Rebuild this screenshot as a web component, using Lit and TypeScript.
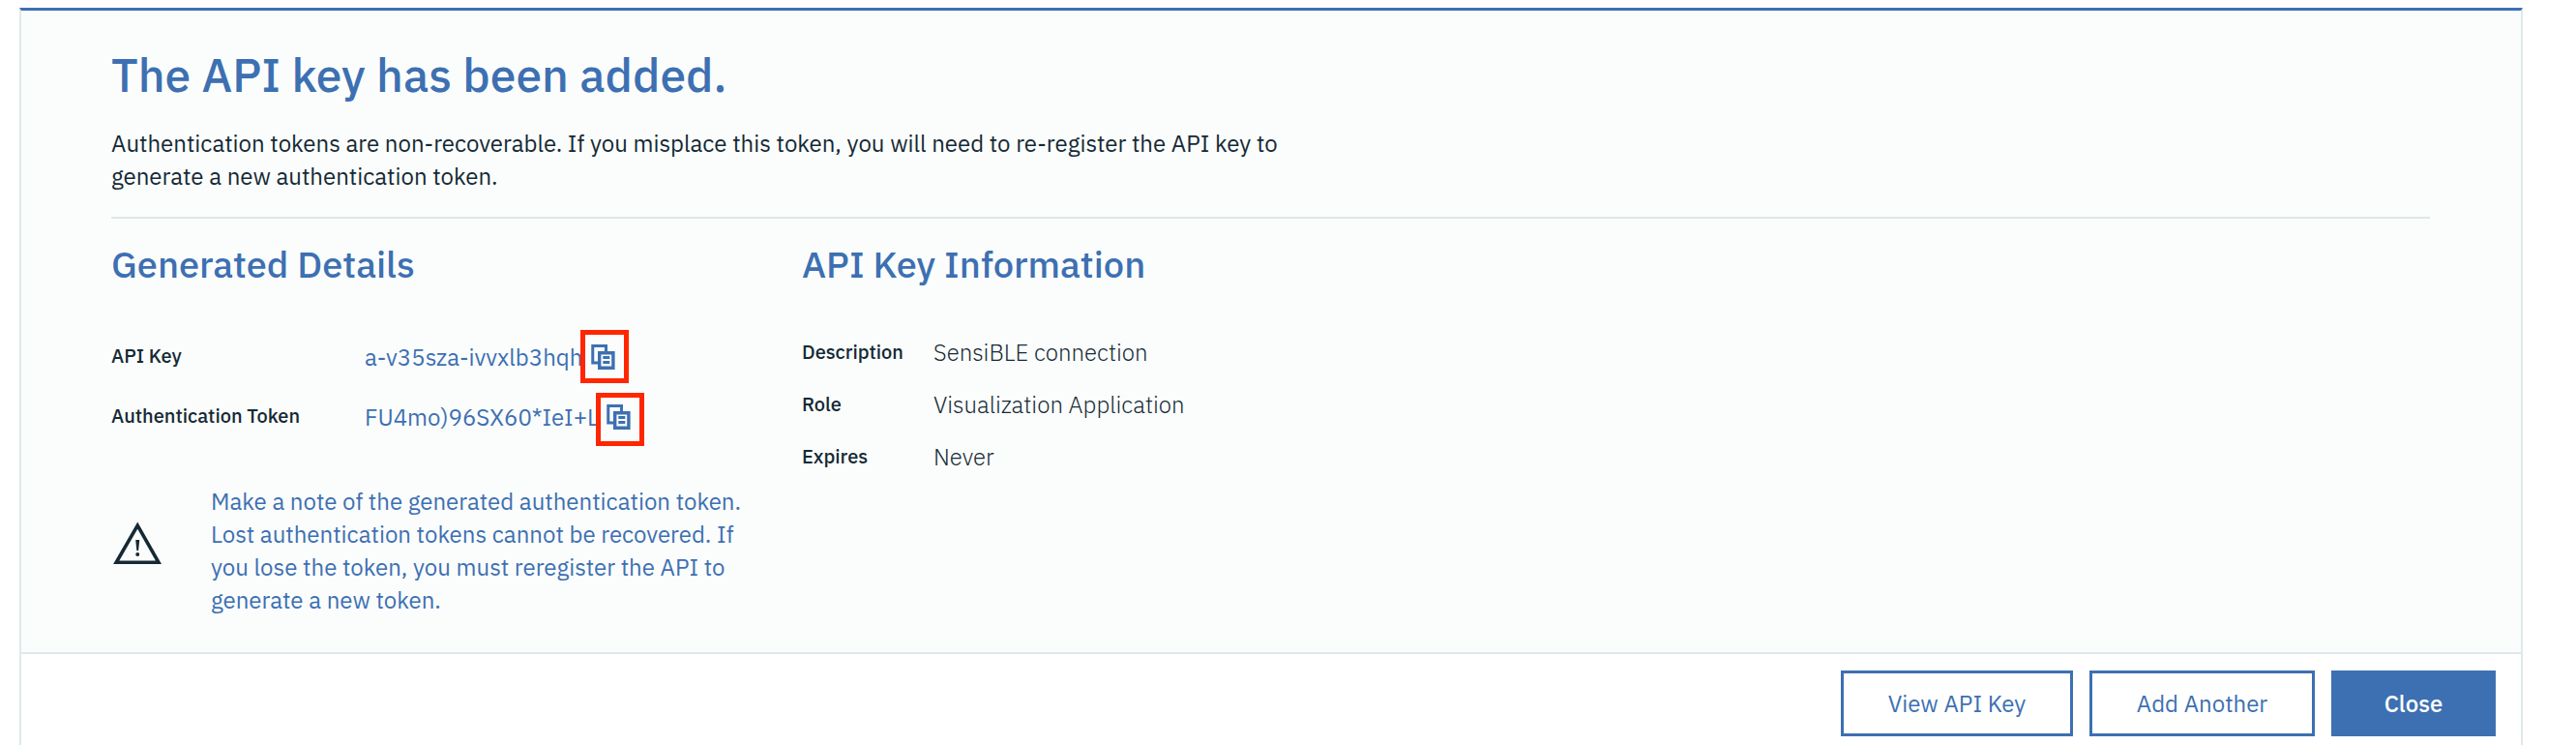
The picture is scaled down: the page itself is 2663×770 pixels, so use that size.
import { LitElement, html, css } from "lit";
import { customElement, property } from "lit/decorators.js";

const FONT = css`"IBM Plex Sans", Inter, "Noto Sans", sans-serif`;

@customElement("copy-button")
class CopyButton extends LitElement {
  @property({ reflect: true }) shift = "";
  static styles = css`
    :host { display: block; position: relative; width: 25px; height: 26px; }
    .icon { display: block; }
    .mark {
      position: absolute; left: -11px; top: -15px; width: 50px; height: 55px;
      box-sizing: border-box; border: 5px solid #ff2600;
    }
    :host([shift="low"]) { margin-left: -1px; }
    :host([shift="low"]) .mark { top: -12px; }
  `;
  render() {
    return html`
      <svg class="icon" width="25" height="26" viewBox="0 0 25 26" fill="none" stroke="#3d70b2">
        <path stroke-width="3" d="M7 19H1.75V1.5H15.5V7" />
        <path stroke-width="3.4" d="M8.7 8.7H22.9V24.3H8.7Z" />
        <path stroke-width="2.8" d="M12.3 13.5H19.3M12.3 18.5H19.3" />
      </svg>
      <span class="mark"></span>
    `;
  }
}

@customElement("app-root")
class AppRoot extends LitElement {
  static styles = css`
    :host {
      display: block; box-sizing: border-box; height: 770px; padding: 8px 55px 0 20px; overflow: hidden;
      background: #fff; color: #152935; font-family: ${FONT}; font-size: 24px; line-height: 34px;
    }
    .panel {
      box-sizing: border-box; height: 762px; display: flex; flex-direction: column;
      border: 2px solid #dfeaea; border-top: 3px solid #3d70b2; border-bottom: 0;
    }
    .content { background: #fbfdfc; padding: 36px 94px 37px 93px; border-bottom: 2px solid #dfe8ea; }
    h1, h2, p, dl, dt, dd { margin: 0; }
    h1 { color: #3d70b2; font-size: 48px; line-height: 60px; font-weight: 500; }
    h2 { color: #3d70b2; font-size: 38px; line-height: 48px; font-weight: 500; }
    .intro { margin-top: 24px; width: 1225px; }
    .rule { height: 2px; background: #dfe6eb; margin: 25px 0 23px; }
    .columns { display: grid; grid-template-columns: 714px 1fr; }
    .rows { display: grid; }
    .generated { grid-template-columns: 262px 1fr; row-gap: 28px; margin-top: 55px; }
    .info { grid-template-columns: 136px 1fr; row-gap: 20px; margin-top: 50px; }
    dt { font-size: 20px; line-height: 29px; font-weight: 500; padding-top: 1px; }
    .info dt { padding-top: 2px; }
    .info dd { font-weight: 300; }
    .value { display: flex; gap: 9px; color: #3d70b2; }
    .value copy-button { margin-top: 4px; }
    .notice { display: flex; align-items: center; gap: 51px; margin-top: 53px; color: #3d70b2; }
    .notice p { width: 570px; }
    .warn { flex: none; margin-top: -15px; }
    .actions { display: flex; justify-content: flex-end; gap: 17px; padding: 17px 26px 0; }
    button {
      box-sizing: border-box; height: 68px; border: 3px solid #3d70b2; background: #fff; color: #3d70b2;
      font: inherit; padding: 0; border-radius: 0;
    }
    .view { width: 240px; }
    .add { width: 233px; }
    .close { width: 170px; background: #3d70b2; color: #fff; font-weight: 500; }
  `;
  render() {
    return html`
      <section class="panel">
        <div class="content">
          <h1>The API key has been added.</h1>
          <p class="intro">Authentication tokens are non-recoverable. If you misplace this token, you will need to re-register the API key to generate a new authentication token.</p>
          <div class="rule"></div>
          <div class="columns">
            <div>
              <h2>Generated Details</h2>
              <dl class="rows generated">
                <dt>API Key</dt>
                <dd class="value"><span>a-v35sza-ivvxlb3hqh</span><copy-button></copy-button></dd>
                <dt>Authentication Token</dt>
                <dd class="value"><span>FU4mo)96SX60*IeI+L</span><copy-button shift="low"></copy-button></dd>
              </dl>
              <div class="notice">
                <svg class="warn" width="52" height="46" viewBox="0 0 52 46">
                  <path d="M27.2 4.2L49 42.3H5.2Z" fill="none" stroke="#152935" stroke-width="3.6" />
                  <path d="M25.2 19H29.2L28.1 30H26.3Z" fill="#152935" />
                  <circle cx="27.2" cy="34" r="2" fill="#152935" />
                </svg>
                <p>Make a note of the generated authentication token. Lost authentication tokens cannot be recovered. If you lose the token, you must reregister the API to generate a new token.</p>
              </div>
            </div>
            <div>
              <h2>API Key Information</h2>
              <dl class="rows info">
                <dt>Description</dt><dd>SensiBLE connection</dd>
                <dt>Role</dt><dd>Visualization Application</dd>
                <dt>Expires</dt><dd>Never</dd>
              </dl>
            </div>
          </div>
        </div>
        <div class="actions">
          <button class="view">View API Key</button>
          <button class="add">Add Another</button>
          <button class="close">Close</button>
        </div>
      </section>
    `;
  }
}
